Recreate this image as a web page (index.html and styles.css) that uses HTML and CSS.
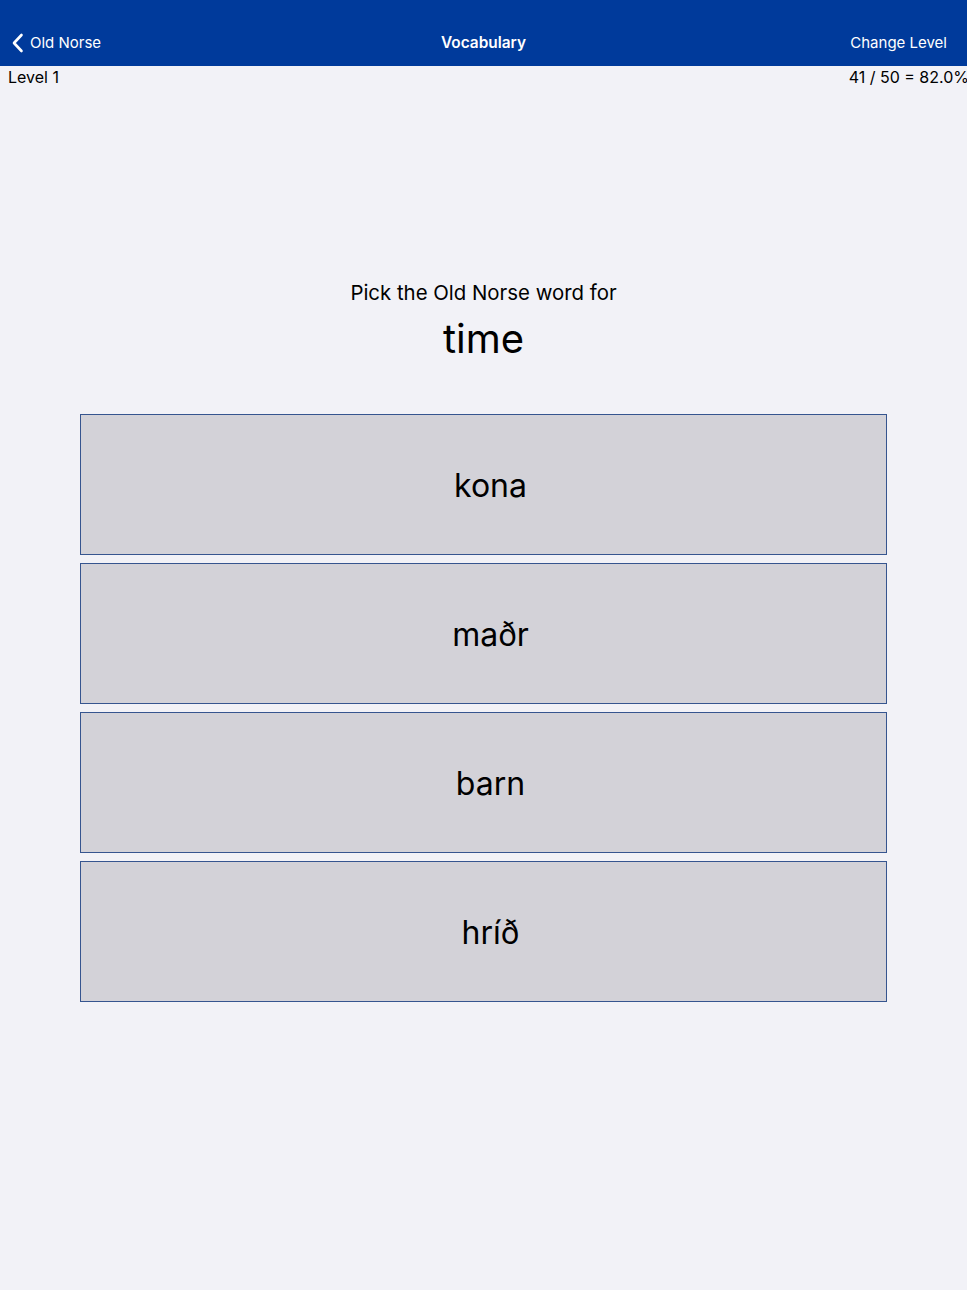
FILE: index.html
```html
<!DOCTYPE html>
<html lang="en">
<head>
<meta charset="utf-8">
<title>Vocabulary</title>
<link rel="stylesheet" href="styles.css">
</head>
<body>
<header class="navbar">
  <a class="nav-back" href="#">
    <svg class="chevron" width="13" height="20" viewBox="0 0 13 20" aria-hidden="true">
      <path d="M10.5 2 L3 10 L10.5 18" fill="none" stroke="#fff" stroke-width="2.6" stroke-linecap="round" stroke-linejoin="round"/>
    </svg>
    <span>Old Norse</span>
  </a>
  <h1 class="nav-title">Vocabulary</h1>
  <a class="nav-action" href="#">Change Level</a>
</header>
<div class="stats">
  <span class="level">Level 1</span>
  <span class="score">41 / 50 = 82.0%</span>
</div>
<main class="quiz">
  <p class="prompt">Pick the Old Norse word for</p>
  <p class="target">time</p>
  <div class="choices">
    <button class="choice">kona</button>
    <button class="choice">maðr</button>
    <button class="choice">barn</button>
    <button class="choice">hríð</button>
  </div>
</main>
</body>
</html>
```

FILE: styles.css
```css
* { box-sizing: border-box; }

html, body {
  margin: 0;
  padding: 0;
  background: #f2f2f7;
  font-family: Inter, "Noto Sans", "Liberation Sans", sans-serif;
  color: #000;
}

.navbar {
  height: 66px;
  background: #003a9b;
  color: #fff;
  display: grid;
  grid-template-columns: 1fr auto 1fr;
  align-items: end;
  padding: 0 20px 13px 20px;
}

.nav-back {
  display: flex;
  align-items: center;
  gap: 6px;
  margin-left: -9px;
  color: #fff;
  text-decoration: none;
  font-size: 15px;
  line-height: 20px;
  justify-self: start;
}

.chevron { display: block; }

.nav-title {
  margin: 0;
  font-size: 15.4px;
  font-weight: 600;
  line-height: 20px;
}

.nav-action {
  justify-self: end;
  color: #fff;
  text-decoration: none;
  font-size: 15px;
  line-height: 20px;
}

.stats {
  display: flex;
  justify-content: space-between;
  padding: 0 0 0 8px;
  height: 22px;
  align-items: center;
  font-size: 16px;
  margin-right: -2px;
}

.quiz {
  display: flex;
  flex-direction: column;
  align-items: center;
  padding-top: 190px;
}

.prompt {
  margin: 0;
  font-size: 20.4px;
  line-height: 30px;
}

.target {
  margin: 6px 0 0;
  font-size: 40px;
  line-height: 50px;
}

.choices {
  width: 807px;
  margin-top: 50px;
  display: flex;
  flex-direction: column;
  gap: 8px;
}

.choice {
  height: 141px;
  background: #d3d2d8;
  border: 1px solid #36558f;
  font-family: inherit;
  font-size: 32px;
  color: #000;
  padding: 2px 0 0 14px;
  cursor: pointer;
}
```
